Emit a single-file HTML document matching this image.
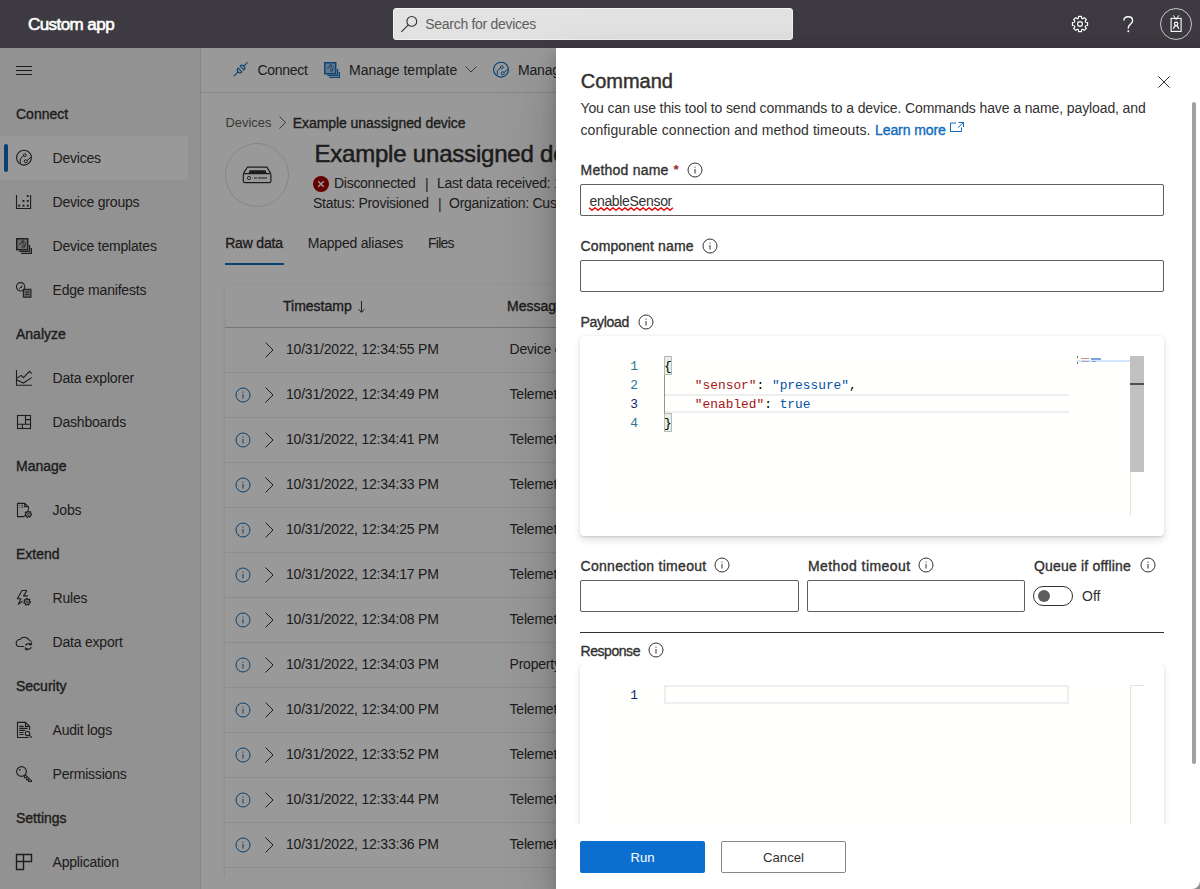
<!DOCTYPE html>
<html><head><meta charset="utf-8">
<style>
*{box-sizing:border-box;margin:0;padding:0}
html,body{width:1200px;height:889px;overflow:hidden;background:#fff;font-family:"Liberation Sans",sans-serif;color:#323130}
.a{position:absolute}
.t{position:absolute;white-space:nowrap;line-height:20px;font-size:13.6px}
.b{font-weight:bold}
.sb{-webkit-text-stroke:0.35px currentColor}
svg{position:absolute;overflow:visible}
.mono{font-family:"Liberation Mono",monospace}
</style></head><body>
<div class="a" style="left:0;top:0;width:1200px;height:48px;background:#3d3b41"></div>
<div class="t sb" style="left:28px;top:14.51px;font-size:17px;color:#fff;letter-spacing:-0.56px;-webkit-text-stroke:0.6px #fff;">Custom app</div>
<div class="a" style="left:393px;top:8px;width:400px;height:32px;background:#e2e2e2;border:1px solid #f2f2f2;border-radius:3px"></div>
<svg style="left:401px;top:16px" width="16" height="16" viewBox="0 0 16 16"><circle cx="10.8" cy="5.4" r="4.9" fill="none" stroke="#323130" stroke-width="1.1"/><line x1="7.3" y1="8.9" x2="0.4" y2="15.8" stroke="#323130" stroke-width="1.1"/></svg>
<div class="t" style="left:425.3px;top:14.15px;font-size:14px;color:#605e5c;letter-spacing:-0.29px;">Search for devices</div>
<svg style="left:1072px;top:16px" width="16" height="16" viewBox="0 0 16 16"><polygon points="13.64,6.28 15.56,6.53 15.56,9.47 13.64,9.72 13.21,10.77 14.38,12.31 12.31,14.38 10.77,13.21 9.72,13.64 9.47,15.56 6.53,15.56 6.28,13.64 5.23,13.21 3.69,14.38 1.62,12.31 2.79,10.77 2.36,9.72 0.44,9.47 0.44,6.53 2.36,6.28 2.79,5.23 1.62,3.69 3.69,1.62 5.23,2.79 6.28,2.36 6.53,0.44 9.47,0.44 9.72,2.36 10.77,2.79 12.31,1.62 14.38,3.69 13.21,5.23" fill="none" stroke="#fff" stroke-width="1.2" stroke-linejoin="round"/><circle cx="8" cy="8" r="2.4" fill="none" stroke="#fff" stroke-width="1.2"/></svg>
<svg style="left:1122.5px;top:16px" width="11" height="17" viewBox="0 0 11 17"><path d="M0.9 4.6 C0.9 2.2 2.8 0.7 5.2 0.7 C7.8 0.7 9.6 2.4 9.6 4.5 C9.6 6.4 8.5 7.4 7.2 8.5 C6 9.5 5.3 10.3 5.3 11.8 L5.3 12.8" fill="none" stroke="#fff" stroke-width="1.35"/><circle cx="5.3" cy="15.2" r="0.95" fill="#fff"/></svg>
<div class="a" style="left:1160px;top:8px;width:32px;height:32px;border:1px solid #c8c8c8;border-radius:50%"></div>
<svg style="left:1169px;top:15px" width="14" height="18" viewBox="0 0 14 18"><rect x="2.1" y="3.4" width="10" height="13" fill="none" stroke="#fff" stroke-width="1.1"/><path d="M4.3 0.3 L7.1 4.5 L9.9 0.3" fill="none" stroke="#fff" stroke-width="1"/><circle cx="7.1" cy="8.8" r="1.7" fill="none" stroke="#fff" stroke-width="1.1"/><path d="M4.4 13.8 C5 11.5 6 10.6 7.1 10.6 C8.2 10.6 9.2 11.5 9.8 13.8" fill="none" stroke="#fff" stroke-width="1.1"/></svg>
<div class="a" style="left:0;top:48px;width:200px;height:841px;background:#f3f3f3"></div>
<div class="a" style="left:200px;top:48px;width:1px;height:841px;background:#e1dfdd"></div>
<div class="a" style="left:0;top:136px;width:188px;height:44px;background:#fff"></div>
<div class="a" style="left:4px;top:144px;width:4px;height:28px;background:#0f6cbd;border-radius:2px"></div>
<div class="a" style="left:16px;top:66px;width:16px;height:1px;background:#323130"></div>
<div class="a" style="left:16px;top:70px;width:16px;height:1px;background:#323130"></div>
<div class="a" style="left:16px;top:74px;width:16px;height:1px;background:#323130"></div>
<div class="t sb" style="left:16px;top:104.15px;font-size:14px;color:#323130;">Connect</div>
<svg style="left:16px;top:150px" width="16" height="16" viewBox="0 0 16 16"><circle cx="8" cy="7.7" r="7.4" fill="none" stroke="#323130" stroke-width="1.1"/><circle cx="8.8" cy="5.2" r="1.4" fill="none" stroke="#323130" stroke-width="1"/><circle cx="9.7" cy="11.3" r="1.5" fill="none" stroke="#323130" stroke-width="1"/><path d="M7.5 5.8 L4.3 8.8 V13 M11 10.5 L15 7.3" fill="none" stroke="#323130" stroke-width="1"/></svg>
<div class="t" style="left:52.5px;top:148.15px;font-size:14px;color:#323130;letter-spacing:-0.2px;">Devices</div>
<svg style="left:16px;top:194px" width="16" height="16" viewBox="0 0 16 16"><path d="M0.5 1 V14.5 H14.6 V1" fill="none" stroke="#323130" stroke-width="1.1"/><rect x="2.2" y="10.7" width="1.9" height="1.9" fill="#323130"/><rect x="6.5" y="10.7" width="1.9" height="1.9" fill="#323130"/><rect x="10.8" y="10.7" width="1.9" height="1.9" fill="#323130"/><rect x="6.5" y="6" width="1.9" height="1.9" fill="#323130"/><rect x="10.8" y="6" width="1.9" height="1.9" fill="#323130"/><rect x="10.8" y="1" width="1.9" height="1.9" fill="#323130"/></svg>
<div class="t" style="left:52.5px;top:192.15px;font-size:14px;color:#323130;letter-spacing:-0.2px;">Device groups</div>
<svg style="left:16px;top:238px" width="16" height="16" viewBox="0 0 16 16"><rect x="0.75" y="0.75" width="11" height="11" fill="#b4b4b4" stroke="#323130" stroke-width="1.4"/><path d="M3.3 13.3 H13.6 V7.1 M5.2 15.4 H15.4 V10" fill="none" stroke="#323130" stroke-width="1.2"/><circle cx="6.8" cy="3.8" r="1.2" fill="none" stroke="#323130" stroke-width="0.9"/><circle cx="7.6" cy="8.3" r="1.2" fill="none" stroke="#323130" stroke-width="0.9"/><path d="M5.8 4.6 L3 6.5 M8.6 7.6 L10 4.5" stroke="#323130" stroke-width="0.9" fill="none"/></svg>
<div class="t" style="left:52.5px;top:236.15px;font-size:14px;color:#323130;letter-spacing:-0.2px;">Device templates</div>
<svg style="left:16px;top:282px" width="16" height="16" viewBox="0 0 16 16"><circle cx="4.6" cy="4.8" r="4.2" fill="none" stroke="#323130" stroke-width="1.1"/><path d="M3 7 L6 3.5 M5 6 L6.5 4.5" stroke="#323130" stroke-width="0.9"/><rect x="7.4" y="7.3" width="7.5" height="7.9" fill="#a9a9a9" stroke="#323130" stroke-width="1.1"/><path d="M9.3 10 H13 M9.3 12.4 H13" stroke="#323130" stroke-width="0.9"/></svg>
<div class="t" style="left:52.5px;top:280.15px;font-size:14px;color:#323130;letter-spacing:-0.2px;">Edge manifests</div>
<div class="t sb" style="left:16px;top:324.15px;font-size:14px;color:#323130;">Analyze</div>
<svg style="left:16px;top:370px" width="16" height="16" viewBox="0 0 16 16"><path d="M0.5 0 V15.3 H15.8" fill="none" stroke="#323130" stroke-width="1.1"/><path d="M0.5 8.4 L5.2 5.4 L7.35 7.6 L13.6 1.3 L15.7 3.6" fill="none" stroke="#323130" stroke-width="1.1"/><path d="M0.5 9.8 L7.35 13 L15.7 7.6" fill="none" stroke="#323130" stroke-width="1.1"/></svg>
<div class="t" style="left:52.5px;top:368.15px;font-size:14px;color:#323130;letter-spacing:-0.2px;">Data explorer</div>
<svg style="left:16px;top:414px" width="16" height="16" viewBox="0 0 16 16"><rect x="1.5" y="1.5" width="13" height="13" fill="none" stroke="#323130" stroke-width="1.1"/><path d="M9.5 1.5 V10.3 M1.5 10.3 H14.5 M9.5 5.6 H14.5 M6.4 10.3 V14.5" fill="none" stroke="#323130" stroke-width="1.1"/></svg>
<div class="t" style="left:52.5px;top:412.15px;font-size:14px;color:#323130;letter-spacing:-0.2px;">Dashboards</div>
<div class="t sb" style="left:16px;top:456.15px;font-size:14px;color:#323130;">Manage</div>
<svg style="left:16px;top:502px" width="16" height="16" viewBox="0 0 16 16"><path d="M8.7 14.6 H1.5 V1.4 H8.7 L12.5 4.9 V7.8 M8.7 1.4 V4.6 H11.4" fill="none" stroke="#323130" stroke-width="1.1"/><path d="M3.3 3.4 H4 M5.2 3.4 H7.1 M3.3 5.3 H4 M5.2 5.3 H7.1" stroke="#323130" stroke-width="0.8"/><path d="M15.50,12.20 L15.42,12.93 L14.27,13.20 L14.00,13.63 L14.26,14.78 L13.63,15.17 L12.71,14.44 L12.20,14.50 L11.47,15.42 L10.77,15.17 L10.77,14.00 L10.40,13.63 L9.23,13.63 L8.98,12.93 L9.90,12.20 L9.96,11.69 L9.23,10.77 L9.62,10.14 L10.77,10.40 L11.20,10.13 L11.47,8.98 L12.20,8.90 L12.71,9.96 L13.20,10.13 L14.26,9.62 L14.78,10.14 L14.27,11.20 L14.44,11.69 Z" fill="none" stroke="#323130" stroke-width="1.1"/><circle cx="12.2" cy="12.2" r="0.8" fill="none" stroke="#323130" stroke-width="0.7"/></svg>
<div class="t" style="left:52.5px;top:500.15px;font-size:14px;color:#323130;letter-spacing:-0.2px;">Jobs</div>
<div class="t sb" style="left:16px;top:544.15px;font-size:14px;color:#323130;">Extend</div>
<svg style="left:16px;top:590px" width="16" height="16" viewBox="0 0 16 16"><path d="M10.9 0.5 H6 L1.4 8.8 H4.9 L2.2 14.4 L6.5 11.2 M10.9 0.5 L7.6 5.9 H11.8" fill="none" stroke="#323130" stroke-width="1.1" stroke-linejoin="round"/><path d="M14.50,11.80 L14.41,12.56 L13.26,12.84 L12.98,13.30 L13.22,14.46 L12.58,14.86 L11.63,14.14 L11.10,14.20 L10.34,15.11 L9.62,14.86 L9.60,13.68 L9.22,13.30 L8.04,13.28 L7.79,12.56 L8.70,11.80 L8.76,11.27 L8.04,10.32 L8.44,9.68 L9.60,9.92 L10.06,9.64 L10.34,8.49 L11.10,8.40 L11.63,9.46 L12.14,9.64 L13.22,9.14 L13.76,9.68 L13.26,10.76 L13.44,11.27 Z" fill="none" stroke="#323130" stroke-width="1.1"/><circle cx="11.1" cy="11.8" r="0.9" fill="none" stroke="#323130" stroke-width="0.8"/></svg>
<div class="t" style="left:52.5px;top:588.15px;font-size:14px;color:#323130;letter-spacing:-0.2px;">Rules</div>
<svg style="left:16px;top:634px" width="16" height="16" viewBox="0 0 16 16"><path d="M7.9 12.5 H3 C1.2 12.5 0.2 11 0.2 9.3 C0.2 7.2 1.8 5.6 4.3 5.3 C5 3.9 6.6 3.2 8.3 3.2 C10.2 3.2 12 4.2 13.3 6.2 L15.5 7.6" fill="none" stroke="#323130" stroke-width="1.1"/><path d="M9.4 11.4 C10.4 9.8 12.5 9.3 14.5 9.8" fill="none" stroke="#323130" stroke-width="1.2"/><path d="M15.6 8.3 V11 H13" fill="#323130" stroke="#323130" stroke-width="0.8"/><path d="M15.4 13.2 C14.5 14.8 12.2 15.4 10.3 14.6" fill="none" stroke="#323130" stroke-width="1.2"/><path d="M9.3 13.2 V15.8 H11.8" fill="#323130" stroke="#323130" stroke-width="0.8"/></svg>
<div class="t" style="left:52.5px;top:632.15px;font-size:14px;color:#323130;letter-spacing:-0.2px;">Data export</div>
<div class="t sb" style="left:16px;top:676.15px;font-size:14px;color:#323130;">Security</div>
<svg style="left:16px;top:722px" width="16" height="16" viewBox="0 0 16 16"><path d="M12.8 15.5 H1.5 V0.4 H9.5 L13.6 4.4 V7.9 M9.5 0.4 V4.4 H13.6" fill="none" stroke="#323130" stroke-width="1.1"/><path d="M3.3 4.4 H7.6 M3.3 6.4 H11.7 M3.3 8.4 H9.2 M3.3 10.5 H7.6 M3.3 12.5 H7.6" stroke="#323130" stroke-width="1.1"/><circle cx="11.5" cy="11.4" r="2.2" fill="none" stroke="#323130" stroke-width="1.1"/><path d="M13.1 13 L15.7 15.6" stroke="#323130" stroke-width="1.1"/></svg>
<div class="t" style="left:52.5px;top:720.15px;font-size:14px;color:#323130;letter-spacing:-0.2px;">Audit logs</div>
<svg style="left:16px;top:766px" width="16" height="16" viewBox="0 0 16 16"><circle cx="5.5" cy="5.5" r="4.9" fill="none" stroke="#323130" stroke-width="1.1"/><rect x="3.1" y="3.1" width="1.5" height="1.5" fill="#323130"/><path d="M9.3 8.9 L15.6 14.9 V15.5 H12.5 V13.6 H10.6 V11.7 H8.4 V9.3" fill="none" stroke="#323130" stroke-width="1.1" stroke-linejoin="miter"/></svg>
<div class="t" style="left:52.5px;top:764.15px;font-size:14px;color:#323130;letter-spacing:-0.2px;">Permissions</div>
<div class="t sb" style="left:16px;top:808.15px;font-size:14px;color:#323130;">Settings</div>
<svg style="left:16px;top:854px" width="16" height="16" viewBox="0 0 16 16"><path d="M0.5 0.5 H15.5 V7.5 H7.5 V15.5 H0.5 Z M7.5 0.5 V7.5 H0.5" fill="none" stroke="#323130" stroke-width="1.4"/></svg>
<div class="t" style="left:52.5px;top:852.15px;font-size:14px;color:#323130;letter-spacing:-0.2px;">Application</div>
<div class="a" style="left:201px;top:92px;width:999px;height:1px;background:#e1dfdd"></div>
<svg style="left:233px;top:61px" width="16" height="16" viewBox="0 0 16 16"><path d="M7.08 5.1 L10.9 8.92 A2.7 2.7 0 0 0 7.08 5.1 Z M8.92 10.9 L5.1 7.08 A2.7 2.7 0 0 0 8.92 10.9 Z M10.9 5.1 L14.6 1.4 M5.1 10.9 L0.9 15.1" fill="none" stroke="#0f6cbd" stroke-width="1.1"/></svg>
<div class="t" style="left:257.4px;top:60.15px;font-size:14px;color:#323130;letter-spacing:-0.26px;">Connect</div>
<svg style="left:324px;top:62px" width="16" height="16" viewBox="0 0 16 16"><rect x="0.75" y="0.75" width="11" height="11" fill="#a9c6e8" stroke="#0f6cbd" stroke-width="1.4"/><path d="M3.3 13.3 H13.6 V7.1 M5.2 15.4 H15.4 V10" fill="none" stroke="#0f6cbd" stroke-width="1.2"/><circle cx="6.8" cy="3.8" r="1.2" fill="none" stroke="#0f6cbd" stroke-width="0.9"/><circle cx="7.6" cy="8.3" r="1.2" fill="none" stroke="#0f6cbd" stroke-width="0.9"/><path d="M5.8 4.6 L3 6.5 M8.6 7.6 L10 4.5" stroke="#0f6cbd" stroke-width="0.9" fill="none"/></svg>
<div class="t" style="left:349px;top:60.15px;font-size:14px;color:#323130;letter-spacing:0px;">Manage template</div>
<svg style="left:465px;top:66px" width="12" height="7" viewBox="0 0 12 7"><path d="M0.5 0.5 L6 6 L11.5 0.5" fill="none" stroke="#605e5c" stroke-width="1"/></svg>
<svg style="left:493px;top:62px" width="16" height="16" viewBox="0 0 16 16"><circle cx="8" cy="7.7" r="7.4" fill="none" stroke="#0f6cbd" stroke-width="1.1"/><circle cx="8.8" cy="5.2" r="1.4" fill="none" stroke="#0f6cbd" stroke-width="1"/><circle cx="9.7" cy="11.3" r="1.5" fill="none" stroke="#0f6cbd" stroke-width="1"/><path d="M7.5 5.8 L4.3 8.8 V13 M11 10.5 L15 7.3" fill="none" stroke="#0f6cbd" stroke-width="1"/></svg>
<div class="t" style="left:518px;top:60.15px;font-size:14px;color:#323130;letter-spacing:-0.2px;">Manage device</div>
<div class="t" style="left:225.5px;top:113.03px;font-size:12.9px;color:#605e5c;">Devices</div>
<svg style="left:279px;top:115.5px" width="7" height="13" viewBox="0 0 7 13"><path d="M0.5 0.5 L6.5 6.5 L0.5 12.5" fill="none" stroke="#605e5c" stroke-width="1"/></svg>
<div class="t sb" style="left:292.7px;top:112.65px;font-size:14px;color:#323130;letter-spacing:-0.06px;">Example unassigned device</div>
<div class="a" style="left:225px;top:143px;width:64px;height:64px;border:1px solid #e1dfdd;border-radius:50%"></div>
<svg style="left:242px;top:165px" width="30" height="19" viewBox="0 0 30 19"><path d="M5.3 2.2 H24.9 L28.9 8.6 M5.3 2.2 L1.3 8.6" fill="none" stroke="#323130" stroke-width="1.2"/><rect x="1.3" y="8.6" width="27.6" height="9" rx="1.6" fill="none" stroke="#323130" stroke-width="1.2"/><path d="M7.6 5.3 H23.6 L24.6 8.2 H6.6 Z" fill="#323130"/><circle cx="7" cy="13" r="1.6" fill="none" stroke="#323130" stroke-width="0.9"/><rect x="12" y="12.3" width="3" height="1.4" fill="#707070"/><rect x="16" y="12.3" width="9" height="1.4" fill="#707070"/></svg>
<div class="t sb" style="left:314.4px;top:144.38px;font-size:24px;color:#323130;letter-spacing:-0.2px;-webkit-text-stroke:0.5px #323130;line-height:32px;top:138.38px;">Example unassigned device</div>
<svg style="left:313px;top:175.5px" width="16" height="16" viewBox="0 0 16 16"><circle cx="8" cy="8" r="8" fill="#a80000"/><path d="M5.2 5.2 L10.8 10.8 M10.8 5.2 L5.2 10.8" stroke="#fff" stroke-width="1.5"/></svg>
<div class="t" style="left:334px;top:172.85px;font-size:14px;color:#323130;letter-spacing:-0.28px;">Disconnected</div>
<div class="t" style="left:425px;top:173.65px;font-size:14px;color:#323130;">|</div>
<div class="t" style="left:437px;top:172.85px;font-size:14px;color:#323130;letter-spacing:-0.26px;">Last data received: 10/31/2022, 12:34:55 PM</div>
<div class="t" style="left:313px;top:193.15px;font-size:14px;color:#323130;letter-spacing:-0.26px;">Status: Provisioned</div>
<div class="t" style="left:438px;top:194.15px;font-size:14px;color:#323130;">|</div>
<div class="t" style="left:449px;top:193.15px;font-size:14px;color:#323130;letter-spacing:-0.26px;">Organization: Custom app</div>
<div class="t sb" style="left:225.2px;top:233.15px;font-size:14px;color:#323130;letter-spacing:-0.18px;">Raw data</div>
<div class="a" style="left:225px;top:263px;width:59px;height:2px;background:#0f6cbd"></div>
<div class="t" style="left:307.7px;top:233.15px;font-size:14px;color:#323130;letter-spacing:-0.2px;">Mapped aliases</div>
<div class="t" style="left:428px;top:233.15px;font-size:14px;color:#323130;letter-spacing:-0.75px;">Files</div>
<div class="a" style="left:201px;top:277px;width:999px;height:600px;overflow:hidden"><div class="a" style="left:24px;top:8px;width:900px;height:700px;background:#fff;border-radius:2px;box-shadow:0 1.6px 3.6px rgba(0,0,0,.13),0 0.3px 0.9px rgba(0,0,0,.11)"></div></div>
<div class="a" style="left:225px;top:327px;width:975px;height:1px;background:#c8c6c4"></div>
<div class="t sb" style="left:283px;top:296.15px;font-size:14px;color:#323130;">Timestamp</div>
<svg style="left:357.5px;top:301px" width="8" height="12" viewBox="0 0 8 12"><path d="M3.5 0 V11.3 M0.6 8.3 L3.5 11.3 L6.4 8.3" fill="none" stroke="#323130" stroke-width="1"/></svg>
<div class="t sb" style="left:507px;top:296.15px;font-size:14px;color:#323130;">Message type</div>
<svg style="left:265px;top:341.5px" width="9" height="16" viewBox="0 0 9 16"><path d="M0.5 0.5 L8 8 L0.5 15.5" fill="none" stroke="#323130" stroke-width="1"/></svg>
<div class="t" style="left:286px;top:339.15px;font-size:14px;color:#323130;letter-spacing:-0.2px;">10/31/2022, 12:34:55 PM</div>
<div class="t" style="left:509.5px;top:339.15px;font-size:14px;color:#323130;letter-spacing:-0.2px;">Device connected</div>
<div class="a" style="left:225px;top:372px;width:975px;height:1px;background:#edebe9"></div>
<svg style="left:234.5px;top:386.5px" width="16" height="16" viewBox="0 0 16 16"><circle cx="8" cy="8" r="7.0" fill="none" stroke="#0f6cbd" stroke-width="1"/><rect x="7.5" y="7" width="1" height="4.5" fill="#0f6cbd"/><rect x="7.5" y="4.6" width="1" height="1.1" fill="#0f6cbd"/></svg>
<svg style="left:265px;top:386.5px" width="9" height="16" viewBox="0 0 9 16"><path d="M0.5 0.5 L8 8 L0.5 15.5" fill="none" stroke="#323130" stroke-width="1"/></svg>
<div class="t" style="left:286px;top:384.15px;font-size:14px;color:#323130;letter-spacing:-0.2px;">10/31/2022, 12:34:49 PM</div>
<div class="t" style="left:509.5px;top:384.15px;font-size:14px;color:#323130;letter-spacing:-0.2px;">Telemetry</div>
<div class="a" style="left:225px;top:417px;width:975px;height:1px;background:#edebe9"></div>
<svg style="left:234.5px;top:431.5px" width="16" height="16" viewBox="0 0 16 16"><circle cx="8" cy="8" r="7.0" fill="none" stroke="#0f6cbd" stroke-width="1"/><rect x="7.5" y="7" width="1" height="4.5" fill="#0f6cbd"/><rect x="7.5" y="4.6" width="1" height="1.1" fill="#0f6cbd"/></svg>
<svg style="left:265px;top:431.5px" width="9" height="16" viewBox="0 0 9 16"><path d="M0.5 0.5 L8 8 L0.5 15.5" fill="none" stroke="#323130" stroke-width="1"/></svg>
<div class="t" style="left:286px;top:429.15px;font-size:14px;color:#323130;letter-spacing:-0.2px;">10/31/2022, 12:34:41 PM</div>
<div class="t" style="left:509.5px;top:429.15px;font-size:14px;color:#323130;letter-spacing:-0.2px;">Telemetry</div>
<div class="a" style="left:225px;top:462px;width:975px;height:1px;background:#edebe9"></div>
<svg style="left:234.5px;top:476.5px" width="16" height="16" viewBox="0 0 16 16"><circle cx="8" cy="8" r="7.0" fill="none" stroke="#0f6cbd" stroke-width="1"/><rect x="7.5" y="7" width="1" height="4.5" fill="#0f6cbd"/><rect x="7.5" y="4.6" width="1" height="1.1" fill="#0f6cbd"/></svg>
<svg style="left:265px;top:476.5px" width="9" height="16" viewBox="0 0 9 16"><path d="M0.5 0.5 L8 8 L0.5 15.5" fill="none" stroke="#323130" stroke-width="1"/></svg>
<div class="t" style="left:286px;top:474.15px;font-size:14px;color:#323130;letter-spacing:-0.2px;">10/31/2022, 12:34:33 PM</div>
<div class="t" style="left:509.5px;top:474.15px;font-size:14px;color:#323130;letter-spacing:-0.2px;">Telemetry</div>
<div class="a" style="left:225px;top:507px;width:975px;height:1px;background:#edebe9"></div>
<svg style="left:234.5px;top:521.5px" width="16" height="16" viewBox="0 0 16 16"><circle cx="8" cy="8" r="7.0" fill="none" stroke="#0f6cbd" stroke-width="1"/><rect x="7.5" y="7" width="1" height="4.5" fill="#0f6cbd"/><rect x="7.5" y="4.6" width="1" height="1.1" fill="#0f6cbd"/></svg>
<svg style="left:265px;top:521.5px" width="9" height="16" viewBox="0 0 9 16"><path d="M0.5 0.5 L8 8 L0.5 15.5" fill="none" stroke="#323130" stroke-width="1"/></svg>
<div class="t" style="left:286px;top:519.15px;font-size:14px;color:#323130;letter-spacing:-0.2px;">10/31/2022, 12:34:25 PM</div>
<div class="t" style="left:509.5px;top:519.15px;font-size:14px;color:#323130;letter-spacing:-0.2px;">Telemetry</div>
<div class="a" style="left:225px;top:552px;width:975px;height:1px;background:#edebe9"></div>
<svg style="left:234.5px;top:566.5px" width="16" height="16" viewBox="0 0 16 16"><circle cx="8" cy="8" r="7.0" fill="none" stroke="#0f6cbd" stroke-width="1"/><rect x="7.5" y="7" width="1" height="4.5" fill="#0f6cbd"/><rect x="7.5" y="4.6" width="1" height="1.1" fill="#0f6cbd"/></svg>
<svg style="left:265px;top:566.5px" width="9" height="16" viewBox="0 0 9 16"><path d="M0.5 0.5 L8 8 L0.5 15.5" fill="none" stroke="#323130" stroke-width="1"/></svg>
<div class="t" style="left:286px;top:564.15px;font-size:14px;color:#323130;letter-spacing:-0.2px;">10/31/2022, 12:34:17 PM</div>
<div class="t" style="left:509.5px;top:564.15px;font-size:14px;color:#323130;letter-spacing:-0.2px;">Telemetry</div>
<div class="a" style="left:225px;top:597px;width:975px;height:1px;background:#edebe9"></div>
<svg style="left:234.5px;top:611.5px" width="16" height="16" viewBox="0 0 16 16"><circle cx="8" cy="8" r="7.0" fill="none" stroke="#0f6cbd" stroke-width="1"/><rect x="7.5" y="7" width="1" height="4.5" fill="#0f6cbd"/><rect x="7.5" y="4.6" width="1" height="1.1" fill="#0f6cbd"/></svg>
<svg style="left:265px;top:611.5px" width="9" height="16" viewBox="0 0 9 16"><path d="M0.5 0.5 L8 8 L0.5 15.5" fill="none" stroke="#323130" stroke-width="1"/></svg>
<div class="t" style="left:286px;top:609.15px;font-size:14px;color:#323130;letter-spacing:-0.2px;">10/31/2022, 12:34:08 PM</div>
<div class="t" style="left:509.5px;top:609.15px;font-size:14px;color:#323130;letter-spacing:-0.2px;">Telemetry</div>
<div class="a" style="left:225px;top:642px;width:975px;height:1px;background:#edebe9"></div>
<svg style="left:234.5px;top:656.5px" width="16" height="16" viewBox="0 0 16 16"><circle cx="8" cy="8" r="7.0" fill="none" stroke="#0f6cbd" stroke-width="1"/><rect x="7.5" y="7" width="1" height="4.5" fill="#0f6cbd"/><rect x="7.5" y="4.6" width="1" height="1.1" fill="#0f6cbd"/></svg>
<svg style="left:265px;top:656.5px" width="9" height="16" viewBox="0 0 9 16"><path d="M0.5 0.5 L8 8 L0.5 15.5" fill="none" stroke="#323130" stroke-width="1"/></svg>
<div class="t" style="left:286px;top:654.15px;font-size:14px;color:#323130;letter-spacing:-0.2px;">10/31/2022, 12:34:03 PM</div>
<div class="t" style="left:509.5px;top:654.15px;font-size:14px;color:#323130;letter-spacing:-0.2px;">Property</div>
<div class="a" style="left:225px;top:687px;width:975px;height:1px;background:#edebe9"></div>
<svg style="left:234.5px;top:701.5px" width="16" height="16" viewBox="0 0 16 16"><circle cx="8" cy="8" r="7.0" fill="none" stroke="#0f6cbd" stroke-width="1"/><rect x="7.5" y="7" width="1" height="4.5" fill="#0f6cbd"/><rect x="7.5" y="4.6" width="1" height="1.1" fill="#0f6cbd"/></svg>
<svg style="left:265px;top:701.5px" width="9" height="16" viewBox="0 0 9 16"><path d="M0.5 0.5 L8 8 L0.5 15.5" fill="none" stroke="#323130" stroke-width="1"/></svg>
<div class="t" style="left:286px;top:699.15px;font-size:14px;color:#323130;letter-spacing:-0.2px;">10/31/2022, 12:34:00 PM</div>
<div class="t" style="left:509.5px;top:699.15px;font-size:14px;color:#323130;letter-spacing:-0.2px;">Telemetry</div>
<div class="a" style="left:225px;top:732px;width:975px;height:1px;background:#edebe9"></div>
<svg style="left:234.5px;top:746.5px" width="16" height="16" viewBox="0 0 16 16"><circle cx="8" cy="8" r="7.0" fill="none" stroke="#0f6cbd" stroke-width="1"/><rect x="7.5" y="7" width="1" height="4.5" fill="#0f6cbd"/><rect x="7.5" y="4.6" width="1" height="1.1" fill="#0f6cbd"/></svg>
<svg style="left:265px;top:746.5px" width="9" height="16" viewBox="0 0 9 16"><path d="M0.5 0.5 L8 8 L0.5 15.5" fill="none" stroke="#323130" stroke-width="1"/></svg>
<div class="t" style="left:286px;top:744.15px;font-size:14px;color:#323130;letter-spacing:-0.2px;">10/31/2022, 12:33:52 PM</div>
<div class="t" style="left:509.5px;top:744.15px;font-size:14px;color:#323130;letter-spacing:-0.2px;">Telemetry</div>
<div class="a" style="left:225px;top:777px;width:975px;height:1px;background:#edebe9"></div>
<svg style="left:234.5px;top:791.5px" width="16" height="16" viewBox="0 0 16 16"><circle cx="8" cy="8" r="7.0" fill="none" stroke="#0f6cbd" stroke-width="1"/><rect x="7.5" y="7" width="1" height="4.5" fill="#0f6cbd"/><rect x="7.5" y="4.6" width="1" height="1.1" fill="#0f6cbd"/></svg>
<svg style="left:265px;top:791.5px" width="9" height="16" viewBox="0 0 9 16"><path d="M0.5 0.5 L8 8 L0.5 15.5" fill="none" stroke="#323130" stroke-width="1"/></svg>
<div class="t" style="left:286px;top:789.15px;font-size:14px;color:#323130;letter-spacing:-0.2px;">10/31/2022, 12:33:44 PM</div>
<div class="t" style="left:509.5px;top:789.15px;font-size:14px;color:#323130;letter-spacing:-0.2px;">Telemetry</div>
<div class="a" style="left:225px;top:822px;width:975px;height:1px;background:#edebe9"></div>
<svg style="left:234.5px;top:836.5px" width="16" height="16" viewBox="0 0 16 16"><circle cx="8" cy="8" r="7.0" fill="none" stroke="#0f6cbd" stroke-width="1"/><rect x="7.5" y="7" width="1" height="4.5" fill="#0f6cbd"/><rect x="7.5" y="4.6" width="1" height="1.1" fill="#0f6cbd"/></svg>
<svg style="left:265px;top:836.5px" width="9" height="16" viewBox="0 0 9 16"><path d="M0.5 0.5 L8 8 L0.5 15.5" fill="none" stroke="#323130" stroke-width="1"/></svg>
<div class="t" style="left:286px;top:834.15px;font-size:14px;color:#323130;letter-spacing:-0.2px;">10/31/2022, 12:33:36 PM</div>
<div class="t" style="left:509.5px;top:834.15px;font-size:14px;color:#323130;letter-spacing:-0.2px;">Telemetry</div>
<div class="a" style="left:225px;top:867px;width:975px;height:1px;background:#edebe9"></div>
<div class="a" style="left:201px;top:877px;width:999px;height:12px;background:#fff"></div>
<div class="a" style="left:0;top:48px;width:1200px;height:841px;background:rgba(0,0,0,.4)"></div>
<div class="a" style="left:556px;top:48px;width:644px;height:841px;background:#fff;box-shadow:0 25.6px 57.6px 0 rgba(0,0,0,.22),0 4.8px 14.4px 0 rgba(0,0,0,.18)"></div>
<div class="t sb" style="left:580.7px;top:71.07px;font-size:20px;color:#323130;-webkit-text-stroke:0.45px #323130;">Command</div>
<svg style="left:1158px;top:76px" width="12" height="12" viewBox="0 0 12 12"><path d="M0.3 0.3 L11.7 11.7 M11.7 0.3 L0.3 11.7" stroke="#323130" stroke-width="1"/></svg>
<div class="t" style="left:580.5px;top:97.85px;font-size:14px;color:#323130;letter-spacing:-0.11px;">You can use this tool to send commands to a device. Commands have a name, payload, and</div>
<div class="t" style="left:580.5px;top:119.85px;font-size:14px;color:#323130;letter-spacing:0.08px;">configurable connection and method timeouts.</div>
<div class="t sb" style="left:875px;top:119.85px;font-size:14px;color:#0f6cbd;letter-spacing:-0.08px;">Learn more</div>
<svg style="left:950px;top:122px" width="14" height="10" viewBox="0 0 14 10"><path d="M6 1 H0.5 V9.5 H11.5 V5.5" fill="none" stroke="#0f6cbd" stroke-width="1"/><path d="M8.5 0.5 H13.5 V5 M13.5 0.5 L8 5.5" fill="none" stroke="#0f6cbd" stroke-width="1"/></svg>
<div class="t sb" style="left:580.5px;top:160.15px;font-size:14px;color:#323130;letter-spacing:0.23px;">Method name</div>
<div class="t b" style="left:673.5px;top:160.29px;font-size:13.6px;color:#a4262c;">*</div>
<svg style="left:687px;top:162px" width="16" height="16" viewBox="0 0 16 16"><circle cx="8" cy="8" r="7.0" fill="none" stroke="#323130" stroke-width="1"/><rect x="7.5" y="7" width="1" height="4.5" fill="#323130"/><rect x="7.5" y="4.6" width="1" height="1.1" fill="#323130"/></svg>
<div class="a" style="left:580px;top:184px;width:584px;height:32px;border:1px solid #605e5c;border-radius:2px"></div>
<div class="t" style="left:589.5px;top:190.65px;font-size:14px;color:#323130;letter-spacing:-0.33px;">enableSensor</div>
<svg style="left:589px;top:206px" width="84" height="6" viewBox="0 0 84 6"><path d="M0 1.8 L3 4.2 L6 1.8 L9 4.2 L12 1.8 L15 4.2 L18 1.8 L21 4.2 L24 1.8 L27 4.2 L30 1.8 L33 4.2 L36 1.8 L39 4.2 L42 1.8 L45 4.2 L48 1.8 L51 4.2 L54 1.8 L57 4.2 L60 1.8 L63 4.2 L66 1.8 L69 4.2 L72 1.8 L75 4.2 L78 1.8 L81 4.2 L84 1.8" fill="none" stroke="#e60000" stroke-width="1.4" stroke-linejoin="round"/></svg>
<div class="t sb" style="left:580.5px;top:236.40px;font-size:14px;color:#323130;letter-spacing:0.13px;">Component name</div>
<svg style="left:702px;top:238px" width="16" height="16" viewBox="0 0 16 16"><circle cx="8" cy="8" r="7.0" fill="none" stroke="#323130" stroke-width="1"/><rect x="7.5" y="7" width="1" height="4.5" fill="#323130"/><rect x="7.5" y="4.6" width="1" height="1.1" fill="#323130"/></svg>
<div class="a" style="left:580px;top:260px;width:584px;height:32px;border:1px solid #605e5c;border-radius:2px"></div>
<div class="t sb" style="left:580.5px;top:312.15px;font-size:14px;color:#323130;letter-spacing:-0.3px;">Payload</div>
<svg style="left:637.5px;top:313.6px" width="16" height="16" viewBox="0 0 16 16"><circle cx="8" cy="8" r="7.0" fill="none" stroke="#323130" stroke-width="1"/><rect x="7.5" y="7" width="1" height="4.5" fill="#323130"/><rect x="7.5" y="4.6" width="1" height="1.1" fill="#323130"/></svg>
<div class="a" style="left:580px;top:336px;width:584px;height:200px;background:#fff;border-radius:4px;box-shadow:0 3.2px 7.2px rgba(0,0,0,.13),0 0.6px 1.8px rgba(0,0,0,.11)"></div>
<div class="a" style="left:600px;top:356px;width:544px;height:160px;background:#fffffe"></div>
<div class="a" style="left:664px;top:394px;width:405px;height:19px;border-top:2px solid #eeeeee;border-bottom:2px solid #eeeeee"></div>
<div class="a" style="left:664px;top:375px;width:1px;height:38px;background:#939393"></div>
<div class="a" style="left:664px;top:356px;width:8px;height:19px;background:#e6f0e6;border:1px solid #b9b9b9"></div>
<div class="a" style="left:664px;top:413px;width:8px;height:19px;background:#e6f0e6;border:1px solid #b9b9b9"></div>
<div class="a mono" style="left:600px;top:356.8px;width:38px;height:19px;line-height:19px;font-size:12.85px;text-align:right;color:#237893">1</div>
<div class="a mono" style="left:600px;top:375.8px;width:38px;height:19px;line-height:19px;font-size:12.85px;text-align:right;color:#237893">2</div>
<div class="a mono" style="left:600px;top:394.8px;width:38px;height:19px;line-height:19px;font-size:12.85px;text-align:right;color:#0b216f">3</div>
<div class="a mono" style="left:600px;top:413.8px;width:38px;height:19px;line-height:19px;font-size:12.85px;text-align:right;color:#237893">4</div>
<div class="a mono" style="left:664px;top:356.8px;height:19px;line-height:19px;font-size:12.85px;white-space:pre"><span style="color:#000">{</span></div>
<div class="a mono" style="left:664px;top:375.8px;height:19px;line-height:19px;font-size:12.85px;white-space:pre">&nbsp;&nbsp;&nbsp;&nbsp;<span style="color:#a31515">"sensor"</span><span style="color:#000">: </span><span style="color:#0451a5">"pressure"</span><span style="color:#000">,</span></div>
<div class="a mono" style="left:664px;top:394.8px;height:19px;line-height:19px;font-size:12.85px;white-space:pre">&nbsp;&nbsp;&nbsp;&nbsp;<span style="color:#a31515">"enabled"</span><span style="color:#000">: </span><span style="color:#0451a5">true</span></div>
<div class="a mono" style="left:664px;top:413.8px;height:19px;line-height:19px;font-size:12.85px;white-space:pre"><span style="color:#000">}</span></div>
<div class="a" style="left:1077px;top:360px;width:53px;height:2px;background:#d3e5fa"></div>
<div class="a" style="left:1077px;top:356px;width:1px;height:2px;background:#666"></div>
<div class="a" style="left:1077px;top:362px;width:1px;height:2px;background:#666"></div>
<div class="a" style="left:1081px;top:358px;width:8px;height:1px;background:#d88"></div>
<div class="a" style="left:1091px;top:358px;width:10px;height:1.5px;background:#7aa6dc"></div>
<div class="a" style="left:1082px;top:360.5px;width:7px;height:1px;background:#b9a"></div>
<div class="a" style="left:1092px;top:360.5px;width:4px;height:1px;background:#7aa6dc"></div>
<div class="a" style="left:1130px;top:356px;width:1px;height:160px;background:#e3e3e3"></div>
<div class="a" style="left:1130px;top:356px;width:14px;height:116px;background:#c1c1c1"></div>
<div class="a" style="left:1130px;top:383px;width:14px;height:2px;background:#505050"></div>
<div class="t sb" style="left:580.5px;top:555.95px;font-size:14px;color:#323130;letter-spacing:0.3px;">Connection timeout</div>
<svg style="left:714px;top:557.2px" width="16" height="16" viewBox="0 0 16 16"><circle cx="8" cy="8" r="7.0" fill="none" stroke="#323130" stroke-width="1"/><rect x="7.5" y="7" width="1" height="4.5" fill="#323130"/><rect x="7.5" y="4.6" width="1" height="1.1" fill="#323130"/></svg>
<div class="a" style="left:580px;top:580px;width:219px;height:32px;border:1px solid #605e5c;border-radius:2px"></div>
<div class="t sb" style="left:807.9px;top:555.95px;font-size:14px;color:#323130;letter-spacing:0.44px;">Method timeout</div>
<svg style="left:918px;top:557.2px" width="16" height="16" viewBox="0 0 16 16"><circle cx="8" cy="8" r="7.0" fill="none" stroke="#323130" stroke-width="1"/><rect x="7.5" y="7" width="1" height="4.5" fill="#323130"/><rect x="7.5" y="4.6" width="1" height="1.1" fill="#323130"/></svg>
<div class="a" style="left:807px;top:580px;width:218px;height:32px;border:1px solid #605e5c;border-radius:2px"></div>
<div class="t sb" style="left:1034px;top:555.75px;font-size:14px;color:#323130;letter-spacing:0.19px;">Queue if offline</div>
<svg style="left:1139.5px;top:557.4px" width="16" height="16" viewBox="0 0 16 16"><circle cx="8" cy="8" r="7.0" fill="none" stroke="#323130" stroke-width="1"/><rect x="7.5" y="7" width="1" height="4.5" fill="#323130"/><rect x="7.5" y="4.6" width="1" height="1.1" fill="#323130"/></svg>
<div class="a" style="left:1033px;top:586px;width:40px;height:20px;border:1px solid #323130;border-radius:10px"></div>
<div class="a" style="left:1038px;top:590px;width:12px;height:12px;background:#605e5c;border-radius:50%"></div>
<div class="t" style="left:1082px;top:586.35px;font-size:14px;color:#323130;">Off</div>
<div class="a" style="left:580px;top:632px;width:584px;height:1px;background:#323130"></div>
<div class="t sb" style="left:580.5px;top:641.15px;font-size:14px;color:#323130;letter-spacing:-0.44px;">Response</div>
<svg style="left:647.6px;top:642.4px" width="16" height="16" viewBox="0 0 16 16"><circle cx="8" cy="8" r="7.0" fill="none" stroke="#323130" stroke-width="1"/><rect x="7.5" y="7" width="1" height="4.5" fill="#323130"/><rect x="7.5" y="4.6" width="1" height="1.1" fill="#323130"/></svg>
<div class="a" style="left:556px;top:664px;width:630px;height:160px;overflow:hidden"><div class="a" style="left:24px;top:0px;width:584px;height:200px;background:#fff;border-radius:4px;box-shadow:0 3.2px 7.2px rgba(0,0,0,.13),0 0.6px 1.8px rgba(0,0,0,.11)"></div><div class="a" style="left:44px;top:20px;width:544px;height:160px;background:#fffffe"></div><div class="a" style="left:108px;top:21px;width:405px;height:19px;border:2px solid #eeeeee"></div><div class="a mono" style="left:44px;top:21.8px;width:38px;height:19px;line-height:19px;font-size:12.85px;text-align:right;color:#0b216f">1</div><div class="a" style="left:574px;top:21px;width:1px;height:160px;background:#e3e3e3"></div><div class="a" style="left:574px;top:21px;width:14px;height:1px;background:#e3e3e3"></div></div>
<div class="a" style="left:1192px;top:102px;width:4px;height:662px;background:#a0a0a0;border-radius:2px"></div>
<div class="a" style="left:580px;top:841px;width:125px;height:32px;background:#0c6fd0;border-radius:2px"></div>
<div class="t" style="left:580px;top:848px;width:125px;text-align:center;color:#fff;font-size:13.1px">Run</div>
<div class="a" style="left:721px;top:841px;width:125px;height:32px;border:1px solid #8a8886;border-radius:2px"></div>
<div class="t" style="left:721px;top:848px;width:125px;text-align:center;color:#323130;font-size:13.2px">Cancel</div>
<svg style="left:1188px;top:877px" width="12" height="12" viewBox="0 0 12 12"><path d="M12 4 A8 8 0 0 1 4 12 H12 Z" fill="#8c8c8c"/></svg>
</body></html>
